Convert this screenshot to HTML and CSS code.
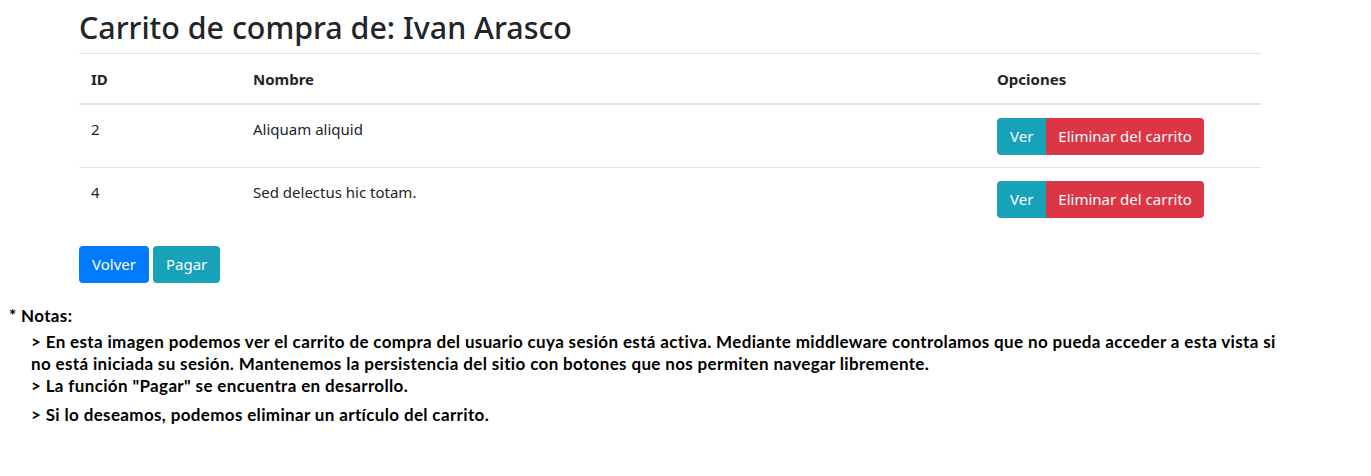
FILE: index.html
```html
<!DOCTYPE html>
<html lang="es">
<head>
<meta charset="utf-8">
<title>Carrito</title>
<link rel="stylesheet" href="styles.css">
</head>
<body>
<div class="container">
  <h1 class="title">Carrito de compra de: Ivan Arasco</h1>
  <table class="table">
    <thead>
      <tr><th class="c-id">ID</th><th class="c-name">Nombre</th><th class="c-opt">Opciones</th></tr>
    </thead>
    <tbody>
      <tr>
        <td>2</td><td>Aliquam aliquid</td>
        <td><div class="btns"><a class="btn btn-info">Ver</a><a class="btn btn-danger">Eliminar del carrito</a></div></td>
      </tr>
      <tr>
        <td>4</td><td>Sed delectus hic totam.</td>
        <td><div class="btns"><a class="btn btn-info">Ver</a><a class="btn btn-danger">Eliminar del carrito</a></div></td>
      </tr>
    </tbody>
  </table>
  <div class="actions"><a class="btn btn-primary">Volver</a><a class="btn btn-info">Pagar</a></div>
</div>
<div class="notes">
  <p class="notes-title">* Notas:</p>
  <div class="notes-list">
    <p>&gt; En esta imagen podemos ver el carrito de compra del usuario cuya sesión está activa. Mediante middleware controlamos que no pueda acceder a esta vista si no está iniciada su sesión. Mantenemos la persistencia del sitio con botones que nos permiten navegar libremente.</p>
    <p>&gt; La función "Pagar" se encuentra en desarrollo.</p>
    <p class="last">&gt; Si lo deseamos, podemos eliminar un artículo del carrito.</p>
  </div>
</div>
</body>
</html>
```
FILE: styles.css
```css
* { box-sizing: border-box; }
body {
  margin: 0;
  font-family: "Noto Sans", "Open Sans", sans-serif;
  font-size: 15px;
  color: #212529;
  background: #fff;
}
.container {
  width: 1182px;
  margin-left: 79px;
}
.title {
  margin: 0;
  padding-top: 10px;
  height: 54px;
  font-size: 30.4px;
  font-weight: 500;
  line-height: 36px;
  border-bottom: 1px solid #dee2e6;
}
.table {
  width: 100%;
  border-collapse: collapse;
}
.table th, .table td {
  padding: 12px;
  text-align: left;
  vertical-align: top;
  line-height: 24px;
}
.table th {
  font-weight: 700;
  border-bottom: 2px solid #dee2e6;
  padding-top: 13px;
}
.table tbody tr + tr td { border-top: 1px solid #dee2e6; }
.c-id { width: 162px; }
.c-name { width: 744px; }
.btns { display: flex; padding-top: 1px; }
.btn {
  display: inline-block;
  height: 37px;
  padding: 0 13px;
  line-height: 37px;
  font-size: 15px;
  color: #fff;
  border-radius: 4px;
}
.btns .btn-info { border-radius: 4px 0 0 4px; }
.btns .btn-danger { border-radius: 0 4px 4px 0; padding: 0 12px; }
.btn-info { background: #17a2b8; }
.btn-danger { background: #dc3545; }
.btn-primary { background: #007bff; }
.actions { display: flex; gap: 4px; margin-top: 16px; }
.notes {
  font-family: "Lato", sans-serif;
  font-weight: 700;
  font-size: 17px;
  letter-spacing: 0.35px;
  color: #000;
  margin-top: 22px;
  padding-left: 9px;
}
.notes p { margin: 0; line-height: 22px; }
.notes-title { margin-bottom: 4px !important; }
.notes-list { padding-left: 22px; width: 1290px; }
.notes-list .last { margin-top: 7px; }
```
